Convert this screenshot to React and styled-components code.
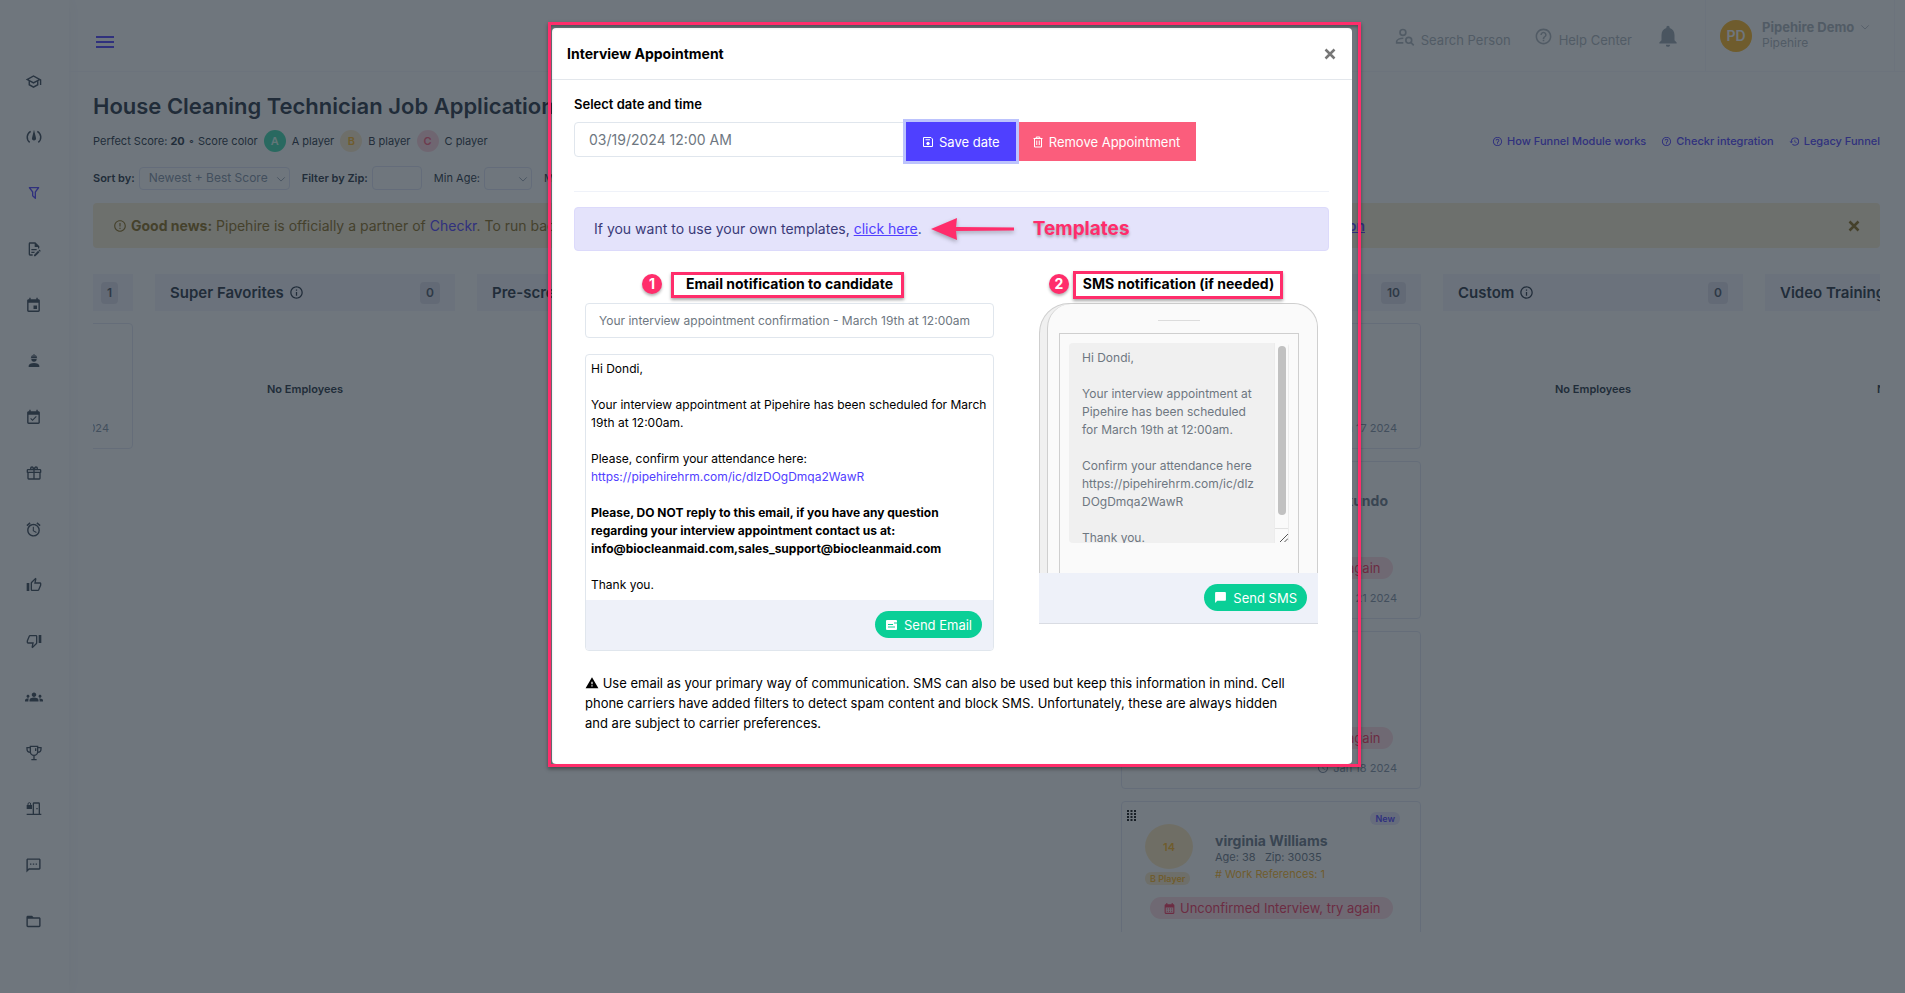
import React from "react";
import styled, { createGlobalStyle, css } from "styled-components";
import {
  MdOutlineSchool, MdEvent, MdEventAvailable, MdAccessAlarm, MdGroups, MdOutlineSms,
  MdFolderOpen, MdHelpOutline, MdNotifications, MdRestore, MdErrorOutline, MdInfoOutline,
  MdAccessTime, MdWarning, MdChatBubble, MdCalendarMonth,
} from "react-icons/md";

const pink = "#ff2d6b";
const blue = "#5140ff";
const ink = "#273444";

const Global = createGlobalStyle`
  *, *::before, *::after { box-sizing: border-box; }
  body { margin: 0; background: #fff; font-family: Inter, "Liberation Sans", sans-serif; font-size: 12px; line-height: 18px; color: ${ink}; }
  button, input, select, textarea { font: inherit; color: inherit; }
  h1, h2, h3, p { margin: 0; }
  svg { flex: none; display: block; }
`;

/* ---------- page shell ---------- */
const Shell = styled.div`
  display: flex;
  height: 100vh;
  overflow: hidden;
`;
const Sidebar = styled.nav`
  flex: none;
  display: flex;
  flex-direction: column;
  width: 69px;
  padding: 53px 2px 0 0;
  box-shadow: 0 0 16px rgba(60, 60, 140, 0.06);
`;
const SideLink = styled.a`
  display: flex;
  align-items: center;
  justify-content: center;
  height: 56px;
  color: ${(p) => (p.$active ? blue : "#3c4858")};
`;
const Content = styled.div`
  flex: 1;
  min-width: 0;
`;
const TopBar = styled.header`
  display: flex;
  align-items: center;
  height: 72px;
  padding: 0 10px 0 24px;
  border-bottom: 1px solid #f6f6fc;
  color: #adb5bd;
`;
const MenuButton = styled.button`
  display: flex;
  flex-direction: column;
  gap: 3px;
  margin: 12px auto 0 3px;
  padding: 0;
  border: 0;
  background: none;
  i { width: 18px; height: 2px; background: ${blue}; }
`;
const TopLink = styled.a`
  display: flex;
  align-items: center;
  gap: 6px;
  margin: 8px 23px 0 0;
  font-size: 13px;
  color: inherit;
  text-decoration: none;
  svg { margin-bottom: 6px; }
`;
const BellButton = styled.button`
  margin-right: 24px;
  padding: 0;
  border: 0;
  background: none;
`;
const Account = styled.div`
  display: flex;
  align-items: center;
  gap: 10px;
  height: 72px;
  width: 190px;
  padding-left: 14px;
  border: solid #f6f6fc;
  border-width: 0 1px;
`;
const Avatar = styled.span`
  display: flex;
  align-items: center;
  justify-content: center;
  width: 32px;
  height: 32px;
  border-radius: 50%;
  background: #ffb822;
  color: #fff;
  font-size: 14px;
  font-weight: 600;
`;
const AccountName = styled.div`
  padding-bottom: 2px;
  line-height: 16px;
  b { display: flex; align-items: center; gap: 6px; font-size: 13px; font-weight: 700; }
`;

const Page = styled.main`
  padding: 22px 25px 0 24px;
`;
const Title = styled.h1`
  font-size: 22px;
  line-height: 24px;
  font-weight: 600;
`;
const Row = styled.div`
  display: flex;
  align-items: center;
  gap: 6px;
  height: 24px;
  margin-top: ${(p) => p.$top}px;
  font-size: 11px;
  white-space: nowrap;
`;
const Dot = styled.span`
  display: flex;
  align-items: center;
  justify-content: center;
  width: 22px;
  height: 22px;
  border-radius: 50%;
  font-weight: 600;
  background: ${(p) => p.$bg};
  color: ${(p) => p.$fg};
`;
const Links = styled.div`
  display: flex;
  gap: 15px;
  margin-left: auto;
`;
const HelpLink = styled.a`
  display: flex;
  align-items: center;
  gap: 4px;
  color: ${blue};
  font-weight: 500;
  text-decoration: none;
`;
const Field = styled.label`
  display: flex;
  align-items: center;
  gap: 4px;
  margin-right: 6px;
  font-weight: ${(p) => (p.$bold ? 600 : 400)};
`;
const SelectBox = styled.span`
  position: relative;
  width: ${(p) => p.$width}px;
  select {
    width: 100%;
    height: 23px;
    padding: 0 9px;
    appearance: none;
    border: 1px solid #dfe4f5;
    border-radius: 4px;
    background: transparent;
    color: #8492a6;
    font-size: 12px;
    font-weight: 400;
  }
  svg { position: absolute; right: 4px; top: 7px; color: #8492a6; }
`;
const ZipInput = styled.input`
  width: 50px;
  height: 24px;
  border: 1px solid #dfe4f5;
  border-radius: 4px;
  background: transparent;
`;
const Notice = styled.div`
  display: flex;
  align-items: center;
  height: 45px;
  margin-top: 13px;
  padding: 0 20px;
  border-radius: 4px;
  background: #faedd2;
  color: #8a6d1c;
  font-size: 14px;
  a { color: ${blue}; text-decoration: none; }
  button { margin-left: auto; padding: 0; border: 0; background: none; }
`;
const NoticeText = styled.p`
  display: flex;
  align-items: center;
  gap: 4px;
  width: 1252px;
  white-space: nowrap;
  > a { margin-left: auto; font-weight: 600; text-decoration: underline; }
`;

/* ---------- board ---------- */
const Board = styled.div`
  height: 658px;
  margin-top: 26px;
  overflow: hidden;
`;
const Track = styled.div`
  display: flex;
  gap: 22px;
  margin-left: -260px;
`;
const Column = styled.section`
  flex: none;
  display: flex;
  flex-direction: column;
  gap: 12px;
  width: 300px;
`;
const ColumnHead = styled.header`
  display: flex;
  align-items: center;
  gap: 5px;
  height: 37px;
  padding: 0 15px;
  background: #f3f3fc;
  h2 { font-size: 15px; font-weight: 600; white-space: nowrap; }
`;
const Count = styled.span`
  margin-left: auto;
  padding: 2px 6px;
  border-radius: 4px;
  background: #dedeea;
  font-weight: 600;
  color: #4c5869;
`;
const Empty = styled.p`
  padding-top: 57px;
  text-align: center;
  font-size: 11px;
  font-weight: 600;
`;
const Card = styled.article`
  position: relative;
  height: ${(p) => p.$height}px;
  padding: 30px 23px 0;
  border: 1px solid #e3e7f4;
  border-radius: 4px;
  color: #6b7787;
`;
const CardDate = styled.time`
  position: absolute;
  right: 23px;
  bottom: 11px;
  display: flex;
  align-items: center;
  gap: 4px;
  font-size: 11px;
  color: #8492a6;
`;
const CardTop = styled.div`
  display: flex;
  gap: 22px;
  height: 65px;
  justify-content: ${(p) => (p.$end ? "flex-end" : "flex-start")};
  padding-right: ${(p) => (p.$end ? 9 : 0)}px;
  h3 { font-size: 14px; font-weight: 700; line-height: 17px; }
  p { font-size: 11px; line-height: 17px; white-space: pre; }
`;
const ScoreBox = styled.div`
  display: flex;
  flex-direction: column;
  align-items: flex-start;
  gap: 3px;
  margin-top: -8px;
  color: #ffb822;
`;
const Score = styled.span`
  display: flex;
  align-items: center;
  justify-content: center;
  width: 48px;
  height: 45px;
  border-radius: 50%;
  background: #ffe9bd;
  font-size: 11px;
  font-weight: 600;
`;
const Tag = styled.span`
  padding: 0 5px;
  border-radius: 6px;
  font-size: 9px;
  font-weight: 600;
  line-height: 13px;
  background: ${(p) => p.$bg};
  color: ${(p) => p.$fg};
  white-space: nowrap;
`;
const NewTag = styled(Tag)`
  position: absolute;
  right: 20px;
  top: 10px;
`;
const Grip = styled.span`
  position: absolute;
  left: 5px;
  top: 8px;
  color: #111;
`;
const Gold = styled.p`
  color: #ffb822;
`;
const RetryPill = styled.a`
  display: flex;
  align-items: center;
  gap: 4px;
  width: 243px;
  height: 22px;
  margin: 0 0 0 5px;
  padding: 0 13px;
  border-radius: 11px;
  background: #ffdbe3;
  color: #f5325c;
  font-size: 13px;
  text-decoration: none;
  white-space: nowrap;
`;

/* ---------- dialog ---------- */
const Backdrop = styled.div`
  position: fixed;
  inset: 0;
  display: flex;
  justify-content: center;
  align-items: flex-start;
  padding: 28px 1px 0 0;
  background: rgba(30, 41, 52, 0.64);
  color: #000;
`;
const Dialog = styled.section`
  position: relative;
  width: 800px;
  max-width: 100%;
  border-radius: 4px;
  background: #fff;
`;
const Frame = styled.div`
  position: absolute;
  inset: -6px -9px -3px -4px;
  border: 3px solid ${pink};
  box-shadow: 0 2px 4px rgba(0, 0, 0, 0.4), inset 0 2px 3px rgba(0, 0, 0, 0.3);
  pointer-events: none;
`;
const DialogHead = styled.header`
  display: flex;
  align-items: center;
  justify-content: space-between;
  height: 52px;
  padding: 0 16px 0 15px;
  border-bottom: 1px solid #e3e7ec;
  h2 { font-size: 14px; font-weight: 700; }
  button { padding: 0; border: 0; background: none; color: #777; }
`;
const DialogBody = styled.div`
  padding: 15px 23px 31px 22px;
`;
const DateLabel = styled.label`
  display: block;
  font-size: 13px;
  font-weight: 600;
`;
const DateRow = styled.div`
  display: flex;
  align-items: flex-start;
  margin-top: 9px;
  padding-bottom: 30px;
  border-bottom: 1px solid #eff2f9;
`;
const inputBox = css`
  height: 35px;
  border: 1px solid #e0e6ed;
  background: #fff;
  color: #6e7781;
`;
const DateInput = styled.input`
  ${inputBox}
  width: 332px;
  padding: 0 14px;
  border-radius: 4px 0 0 4px;
  font-size: 14px;
`;
const ActionButton = styled.button`
  position: relative;
  display: flex;
  align-items: center;
  gap: 5px;
  height: 39px;
  padding: 0 16px;
  border: 0;
  background: ${(p) => (p.$danger ? "#fb5d7c" : "#4f40ff")};
  box-shadow: ${(p) => (p.$danger ? "none" : "0 0 0 3px #bcc3fd")};
  z-index: ${(p) => (p.$danger ? 0 : 1)};
  color: #fff;
  font-size: 13px;
`;
const Tip = styled.div`
  display: flex;
  align-items: center;
  height: 44px;
  margin-top: 15px;
  padding: 0 19px;
  border: 1px solid #dcdafb;
  border-radius: 4px;
  background: #e4e3fb;
  color: #3a3a78;
  font-size: 14px;
  a { color: ${blue}; }
`;
const ArrowMark = styled.svg`
  margin: 0 18px 0 9px;
  filter: drop-shadow(0 2px 2px rgba(0, 0, 0, 0.3));
`;
const Callout = styled.strong`
  color: ${pink};
  font-size: 19px;
  font-weight: 700;
  text-shadow: 0 2px 3px rgba(0, 0, 0, 0.3);
`;
const Panels = styled.div`
  display: grid;
  grid-template-columns: minmax(0, 1fr) 279px;
  align-items: start;
  gap: 45px;
  padding: 19px 11px 0;
`;
const PanelHead = styled.div`
  display: flex;
  align-items: center;
  justify-content: center;
  height: 28px;
  margin-bottom: 5px;
`;
const Marked = styled.h3`
  position: relative;
  font-size: 14px;
  font-weight: 700;
  line-height: 24px;
  white-space: nowrap;
`;
const MarkBox = styled.span`
  position: absolute;
  inset: ${(p) => p.$inset};
  border: 3px solid ${pink};
  box-shadow: 0 2px 3px rgba(0, 0, 0, 0.35);
`;
const Step = styled.span`
  position: absolute;
  left: ${(p) => p.$left}px;
  top: 2px;
  width: 20px;
  border-radius: 50%;
  background: ${pink};
  box-shadow: 0 2px 3px rgba(0, 0, 0, 0.3);
  color: #fff;
  line-height: 20px;
  text-align: center;
`;
const Subject = styled.input`
  ${inputBox}
  display: block;
  width: 100%;
  padding: 0 13px;
  border-radius: 4px;
`;
const Mail = styled.div`
  margin-top: 16px;
  border: 1px solid #e0e6ed;
  border-radius: 4px;
  overflow: hidden;
`;
const MailText = styled.div`
  padding: 5px 5px 6px;
  p + p { margin-top: 18px; }
  a { color: ${blue}; text-decoration: none; }
  strong { font-weight: 700; }
`;
const PanelFoot = styled.footer`
  display: flex;
  align-items: flex-start;
  justify-content: flex-end;
  height: 50px;
  padding: 11px 11px 0;
  background: #eef1f9;
`;
const SendButton = styled.button`
  display: flex;
  align-items: center;
  gap: 6px;
  height: 27px;
  padding: 0 10px;
  border: 0;
  border-radius: 14px;
  background: #0acf97;
  color: #fff;
  font-size: 13px;
`;
const Phone = styled.div`
  border-bottom: 1px solid #d9dce3;
`;
const PhoneBack = styled.div`
  height: 270px;
  padding-left: 7px;
  border: 1px solid #cfcfcf;
  border-bottom: 0;
  border-radius: 30px 24px 0 0;
  background: #f0f0f0;
`;
const PhoneFront = styled.div`
  display: flex;
  flex-direction: column;
  align-items: center;
  height: 100%;
  padding: 16px 18px 0 11px;
  border-left: 1px solid #cfcfcf;
  border-radius: 24px 24px 0 0;
  background: #fafafa;
`;
const Speaker = styled.i`
  width: 42px;
  height: 1px;
  background: #dcdcdc;
`;
const Screen = styled.div`
  width: 100%;
  flex: 1;
  margin-top: 12px;
  padding: 9px 9px 0;
  border: 1px solid #cfcfcf;
  border-bottom: 0;
`;
const SmsBox = styled.div`
  display: flex;
  height: 200px;
  border-radius: 4px;
  overflow: hidden;
`;
const SmsText = styled.textarea`
  flex: 1;
  min-width: 0;
  padding: 6px 13px;
  border: 0;
  overflow: hidden;
  resize: none;
  background: #f0f0f0;
  color: #6e7781;
`;
const ScrollRail = styled.div`
  display: flex;
  flex-direction: column;
  justify-content: space-between;
  align-items: center;
  width: 15px;
  padding-top: 3px;
  border: solid #ececec;
  border-width: 0 1px;
  i { width: 8px; height: 169px; border-radius: 4px; background: #c1c1c1; }
`;
const Advice = styled.p`
  padding: 22px 26px 0 11px;
  font-size: 13px;
  line-height: 20px;
  svg { display: inline-block; vertical-align: -2px; }
`;

/* ---------- drawn icons ---------- */
const Icon = ({ size = 16, children, stroke }) => (
  <svg
    width={size} height={size} viewBox="0 0 24 24" aria-hidden="true"
    fill={stroke ? "none" : "currentColor"}
    stroke={stroke ? "currentColor" : "none"} strokeWidth={stroke || 0}
  >
    {children}
  </svg>
);
const thumb = "M5,9V21H1V9H5M9,21A2,2 0 0,1 7,19V9C7,8.45 7.22,7.95 7.59,7.59L14.17,1L15.23,2.06C15.5,2.33 15.67,2.7 15.67,3.11L15.64,3.43L14.69,8H21C22.11,8 23,8.9 23,10V12C23,12.26 22.95,12.5 22.86,12.73L19.84,19.78C19.54,20.5 18.83,21 18,21H9M9,19H18.03L21,12V10H12.21L13.34,4.68L9,9.03V19Z";
const Gauge = () => (
  <Icon>
    <path d="M12 1L9 13.5a3.1 3.1 0 1 0 6 0Z" />
    <path d="M7 3.5A10 10 0 0 0 5.5 20M17 3.5A10 10 0 0 1 18.5 20" fill="none" stroke="currentColor" strokeWidth="2.2" />
  </Icon>
);
const Funnel = () => (
  <Icon>
    <path d="M15,19.88C15.04,20.18 14.94,20.5 14.71,20.71C14.32,21.1 13.69,21.1 13.3,20.71L9.29,16.7C9.06,16.47 8.96,16.16 9,15.87V10.75L4.21,4.62C3.87,4.19 3.95,3.56 4.38,3.22C4.57,3.08 4.78,3 5,3H19C19.22,3 19.43,3.08 19.62,3.22C20.05,3.56 20.13,4.19 19.79,4.62L15,10.75V19.88M7.04,5L11,10.06V15.58L13,17.58V10.05L16.96,5H7.04Z" />
  </Icon>
);
const DocEdit = () => (
  <Icon>
    <path d="M8,12H16V14H8V12M10,20H6V4H13V9H18V12.1L20,10.1V8L14,2H6A2,2 0 0,0 4,4V20A2,2 0 0,0 6,22H10V20M8,18H12.1L13,17.1V16H8V18M20.2,13C20.3,13 20.5,13.1 20.6,13.2L21.9,14.5C22.1,14.7 22.1,15.1 21.9,15.3L20.9,16.3L18.8,14.2L19.8,13.2C19.9,13.1 20,13 20.2,13M20.2,16.9L14.1,23H12V20.9L18.1,14.8L20.2,16.9Z" />
  </Icon>
);
const Worker = () => (
  <Icon>
    <path d="M12,15C7.58,15 4,16.79 4,19V21H20V19C20,16.79 16.42,15 12,15M8,9A4,4 0 0,0 12,13A4,4 0 0,0 16,9M11.5,2C11.2,2 11,2.21 11,2.5V5.5H10V3C10,3 7.75,3.86 7.75,6.75C7.75,6.75 7,6.89 7,8H17C16.95,6.89 16.25,6.75 16.25,6.75C16.25,3.86 14,3 14,3V5.5H13V2.5C13,2.21 12.81,2 12.5,2H11.5Z" />
  </Icon>
);
const Gift = () => (
  <Icon>
    <path d="M22,12V20A2,2 0 0,1 20,22H4A2,2 0 0,1 2,20V12A1,1 0 0,1 1,11V8A2,2 0 0,1 3,6H6.17C6.06,5.69 6,5.35 6,5A3,3 0 0,1 9,2C10,2 10.88,2.5 11.43,3.24L12,4L12.57,3.24C13.12,2.5 14,2 15,2A3,3 0 0,1 18,5C18,5.35 17.94,5.69 17.83,6H21A2,2 0 0,1 23,8V11A1,1 0 0,1 22,12M4,20H11V12H4V20M20,20V12H13V20H20M9,4A1,1 0 0,0 8,5A1,1 0 0,0 9,6A1,1 0 0,0 10,5A1,1 0 0,0 9,4M15,4A1,1 0 0,0 14,5A1,1 0 0,0 15,6A1,1 0 0,0 16,5A1,1 0 0,0 15,4M3,8V10H11V8H3M13,8V10H21V8H13Z" />
  </Icon>
);
const ThumbUp = () => <Icon><path d={thumb} /></Icon>;
const ThumbDown = () => <Icon><path d={thumb} transform="rotate(180 12 12)" /></Icon>;
const Trophy = () => (
  <Icon stroke={2}>
    <path d="M6.5 2h11v8a5.5 5.5 0 0 1-11 0ZM6.5 4H1.5v2a5 5 0 0 0 5 5M17.5 4h5v2a5 5 0 0 1-5 5M12 15.5V22M8 22h8M14.5 5v4" />
  </Icon>
);
const DoorLock = () => (
  <Icon>
    <path d="M1 6h8v6H1ZM10 19V4a2 2 0 0 1 2-2h7a2 2 0 0 1 2 2v15h2v2H1v-2ZM12 4v15h7V4ZM15.5 10.5h2v2h-2Z" fillRule="evenodd" />
    <path d="M3 6.5V4.5a2 2 0 0 1 4 0v2" fill="none" stroke="currentColor" strokeWidth="1.5" />
  </Icon>
);
const PersonSearch = () => (
  <Icon size={20} stroke={2}>
    <circle cx="9.5" cy="6.5" r="3.5" />
    <path d="M10 13.5c-4 0-8 1.5-8 4V19h8" />
    <circle cx="16.5" cy="16" r="3.5" />
    <path d="M19 18.5l3.5 3.5" />
  </Icon>
);
const Chevron = ({ size = 12 }) => <Icon size={size} stroke={2}><path d="M3 8l9 9 9-9" /></Icon>;
const Cross = ({ size }) => <Icon size={size} stroke={5}><path d="M3 3l18 18M21 3L3 21" /></Icon>;
const Disk = () => (
  <Icon size={12} stroke={2}>
    <path d="M3 3h15l3 3v15H3ZM7 7.5h9" />
    <circle cx="12" cy="15" r="2.5" fill="currentColor" />
  </Icon>
);
const Bin = () => (
  <Icon size={12} stroke={2}>
    <path d="M3 5h18M8.5 5V2h7v3M5 5v17h14V5M9.5 9v9M14.5 9v9" />
  </Icon>
);
const MailGlyph = () => (
  <svg width="13" height="12" viewBox="0 0 13 12" aria-hidden="true">
    <rect x="1" y="1" width="11" height="10" rx="1" fill="currentColor" />
    <path d="M3 5.5h5M3 8h7M9 4h3" stroke="#0acf97" />
  </svg>
);
const Resizer = () => (
  <svg width="13" height="15" viewBox="0 0 13 15" aria-hidden="true">
    <path d="M0 .5h13" stroke="#e2e2e2" />
    <path d="M5 14l8-8M9.5 14l3.5-3.5" stroke="#555" />
  </svg>
);

const sideItems = [
  ["Academy", <MdOutlineSchool size={17} />], ["Dashboard", <Gauge />], ["Funnel", <Funnel />],
  ["Forms", <DocEdit />], ["Calendar", <MdEvent size={17} />], ["Workers", <Worker />],
  ["Attendance", <MdEventAvailable size={17} />], ["Rewards", <Gift />], ["Time clock", <MdAccessAlarm size={17} />],
  ["Likes", <ThumbUp />], ["Dislikes", <ThumbDown />], ["Team", <MdGroups size={18} />],
  ["Awards", <Trophy />], ["Access", <DoorLock />], ["Messages", <MdOutlineSms size={17} />],
  ["Files", <MdFolderOpen size={17} />],
];

const Head = ({ title, count }) => (
  <ColumnHead>
    {title && <h2>{title}</h2>}
    {title && <MdInfoOutline size={15} />}
    <Count>{count}</Count>
  </ColumnHead>
);
const When = ({ children }) => <CardDate><MdAccessTime size={12} />{children}</CardDate>;
const Retry = () => (
  <RetryPill href="#retry"><MdCalendarMonth size={13} />Unconfirmed Interview, try again</RetryPill>
);

const smsBody = `Hi Dondi,

Your interview appointment at Pipehire has been scheduled for March 19th at 12:00am.

Confirm your attendance here https://pipehirehrm.com/ic/dlzDOgDmqa2WawR

Thank you.`;

function FunnelPage() {
  return (
    <Shell>
      <Sidebar aria-label="Main">
        {sideItems.map(([name, icon]) => (
          <SideLink key={name} href="#" aria-label={name} $active={name === "Funnel"}>{icon}</SideLink>
        ))}
      </Sidebar>
      <Content>
        <TopBar>
          <MenuButton aria-label="Menu"><i /><i /><i /></MenuButton>
          <TopLink href="#search"><PersonSearch />Search Person</TopLink>
          <TopLink href="#help"><MdHelpOutline size={19} />Help Center</TopLink>
          <BellButton aria-label="Notifications"><MdNotifications size={26} color="#98a4b0" /></BellButton>
          <Account>
            <Avatar>PD</Avatar>
            <AccountName><b>Pipehire Demo <Chevron size={10} /></b>Pipehire</AccountName>
          </Account>
        </TopBar>
        <Page>
          <Title>House Cleaning Technician Job Applications</Title>
          <Row $top={11}>
            <span>Perfect Score: <b>20</b> ∘ Score color</span>
            <Dot $bg="#3fdcae" $fg="#d8fff2">A</Dot> A player
            <Dot $bg="#fdebcb" $fg="#ffb822">B</Dot> B player
            <Dot $bg="#ffd3de" $fg="#fb5d7c">C</Dot> C player
            <Links>
              <HelpLink href="#funnel"><MdHelpOutline size={11} />How Funnel Module works</HelpLink>
              <HelpLink href="#checkr"><MdHelpOutline size={11} />Checkr integration</HelpLink>
              <HelpLink href="#legacy"><MdRestore size={11} />Legacy Funnel</HelpLink>
            </Links>
          </Row>
          <Row $top={13}>
            <Field $bold>Sort by:
              <SelectBox $width={151}><select><option>Newest + Best Score</option></select><Chevron size={10} /></SelectBox>
            </Field>
            <Field $bold>Filter by Zip:<ZipInput /></Field>
            <Field>Min Age:
              <SelectBox $width={48}><select><option></option></select><Chevron size={10} /></SelectBox>
            </Field>
            <Field>Max Age:</Field>
          </Row>
          <Notice>
            <NoticeText>
              <MdErrorOutline size={14} />
              <span><b>Good news:</b> Pipehire is officially a partner of <a href="#partner">Checkr</a>. To run background</span>
              <a href="#integration">integration</a>
            </NoticeText>
            <button aria-label="Dismiss"><Cross size={12} /></button>
          </Notice>
          <Board>
            <Track>
              <Column>
                <Head count={1} />
                <Card $height={126}><When>Jan 17 2024</When></Card>
              </Column>
              <Column><Head title="Super Favorites" count={0} /><Empty>No Employees</Empty></Column>
              <Column><Head title="Pre-screening" count={0} /></Column>
              <Column><Head count={0} /></Column>
              <Column>
                <Head count={10} />
                <Card $height={126}><When>Jan 17 2024</When></Card>
                <Card $height={158}>
                  <CardTop $end><h3>kundo</h3></CardTop>
                  <Retry />
                  <When>Jan 21 2024</When>
                </Card>
                <Card $height={158}>
                  <CardTop />
                  <Retry />
                  <When>Jan 18 2024</When>
                </Card>
                <Card $height={158}>
                  <Grip><svg width="9" height="12" viewBox="0 0 9 12" aria-hidden="true"><path d="M1 0v12M4.5 0v12M8 0v12" stroke="currentColor" strokeWidth="2" strokeDasharray="2 1" /></svg></Grip>
                  <NewTag $bg="#e6e4fb" $fg={blue}>New</NewTag>
                  <CardTop>
                    <ScoreBox><Score>14</Score><Tag $bg="#fdebcb" $fg="#ffb822">B Player</Tag></ScoreBox>
                    <div>
                      <h3>virginia Williams</h3>
                      <p>{"Age: 38   Zip: 30035"}</p>
                      <Gold># Work References: 1</Gold>
                    </div>
                  </CardTop>
                  <Retry />
                </Card>
              </Column>
              <Column><Head title="Custom" count={0} /><Empty>No Employees</Empty></Column>
              <Column><Head title="Video Training" count={0} /><Empty>No Employees</Empty></Column>
            </Track>
          </Board>
        </Page>
      </Content>
    </Shell>
  );
}

function AppointmentDialog() {
  return (
    <Backdrop>
      <Dialog role="dialog" aria-labelledby="dialog-title">
        <DialogHead>
          <h2 id="dialog-title">Interview Appointment</h2>
          <button aria-label="Close"><Cross size={12} /></button>
        </DialogHead>
        <DialogBody>
          <DateLabel htmlFor="date">Select date and time</DateLabel>
          <DateRow>
            <DateInput id="date" defaultValue="03/19/2024 12:00 AM" />
            <ActionButton><Disk />Save date</ActionButton>
            <ActionButton $danger><Bin />Remove Appointment</ActionButton>
          </DateRow>
          <Tip>
            <span>If you want to use your own templates, <a href="#templates">click here</a>.</span>
            <ArrowMark width="84" height="22" viewBox="0 0 84 22" aria-hidden="true">
              <path d="M0 11L26 0L25 9L83 9.5V12.5L25 13L26 22Z" fill={pink} />
            </ArrowMark>
            <Callout>Templates</Callout>
          </Tip>
          <Panels>
            <div>
              <PanelHead>
                <Marked>
                  <MarkBox $inset="0 -11px -2px -15px" />
                  <Step $left={-44}>1</Step>
                  Email notification to candidate
                </Marked>
              </PanelHead>
              <Subject aria-label="Email subject" defaultValue="Your interview appointment confirmation - March 19th at 12:00am" />
              <Mail>
                <MailText>
                  <p>Hi Dondi,</p>
                  <p>Your interview appointment at Pipehire has been scheduled for March 19th at 12:00am.</p>
                  <p>Please, confirm your attendance here:<br /><a href="#confirm">https://pipehirehrm.com/ic/dlzDOgDmqa2WawR</a></p>
                  <p><strong>Please, DO NOT reply to this email, if you have any question regarding your interview appointment contact us at: info@biocleanmaid.com,sales_support@biocleanmaid.com</strong></p>
                  <p>Thank you.</p>
                </MailText>
                <PanelFoot><SendButton><MailGlyph />Send Email</SendButton></PanelFoot>
              </Mail>
            </div>
            <div>
              <PanelHead>
                <Marked>
                  <MarkBox $inset="-1px -9px -3px -10px" />
                  <Step $left={-34}>2</Step>
                  SMS notification (if needed)
                </Marked>
              </PanelHead>
              <Phone>
                <PhoneBack>
                  <PhoneFront>
                    <Speaker />
                    <Screen>
                      <SmsBox>
                        <SmsText aria-label="SMS text" defaultValue={smsBody} />
                        <ScrollRail><i /><Resizer /></ScrollRail>
                      </SmsBox>
                    </Screen>
                  </PhoneFront>
                </PhoneBack>
                <PanelFoot><SendButton><MdChatBubble size={13} />Send SMS</SendButton></PanelFoot>
              </Phone>
            </div>
          </Panels>
          <Advice>
            <MdWarning size={14} /> Use email as your primary way of communication. SMS can also be used but keep this information in mind. Cell phone carriers have added filters to detect spam content and block SMS. Unfortunately, these are always hidden and are subject to carrier preferences.
          </Advice>
        </DialogBody>
        <Frame />
      </Dialog>
    </Backdrop>
  );
}

export default function App() {
  return (
    <>
      <Global />
      <FunnelPage />
      <AppointmentDialog />
    </>
  );
}
